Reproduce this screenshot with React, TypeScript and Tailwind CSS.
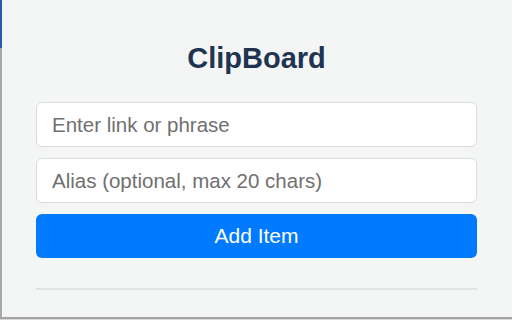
export default function App() {
  return (
    <div className="w-[512px] h-[320px] flex flex-col bg-[#f4f5f5] font-['Liberation_Sans',Arial,sans-serif] overflow-hidden">
      <div className="flex flex-1 min-h-0">
        <div className="w-[2px] flex flex-col shrink-0">
          <div className="h-[48px] bg-[#2a5aa8]" />
          <div className="flex-1 bg-[#a9a9a9]" />
        </div>
        <div className="flex-1 pl-[34px] pr-[35px] pt-[40px] flex flex-col">
          <h1 className="text-center text-[29px] leading-[36px] font-bold text-[#1f3450] mb-[26px]">
            ClipBoard
          </h1>
          <div className="flex flex-col gap-[11px]">
            <input
              className="h-[45px] w-full bg-white border border-[#dcdcdc] rounded-md px-[15px] text-[20.5px] text-[#333] placeholder:text-[#707070] outline-none"
              placeholder="Enter link or phrase"
            />
            <input
              className="h-[45px] w-full bg-white border border-[#dcdcdc] rounded-md px-[15px] text-[20.5px] text-[#333] placeholder:text-[#707070] outline-none"
              placeholder="Alias (optional, max 20 chars)"
            />
            <button className="h-[44px] w-full bg-[#007bff] rounded-md text-white text-[21px]">
              Add Item
            </button>
          </div>
          <div className="mt-[30px] h-[2px] bg-[#e2e3e3]" />
        </div>
      </div>
      <div className="h-[2px] bg-[#a3a3a3]" />
      <div className="h-[1px] bg-[#d8d8d8]" />
    </div>
  );
}
